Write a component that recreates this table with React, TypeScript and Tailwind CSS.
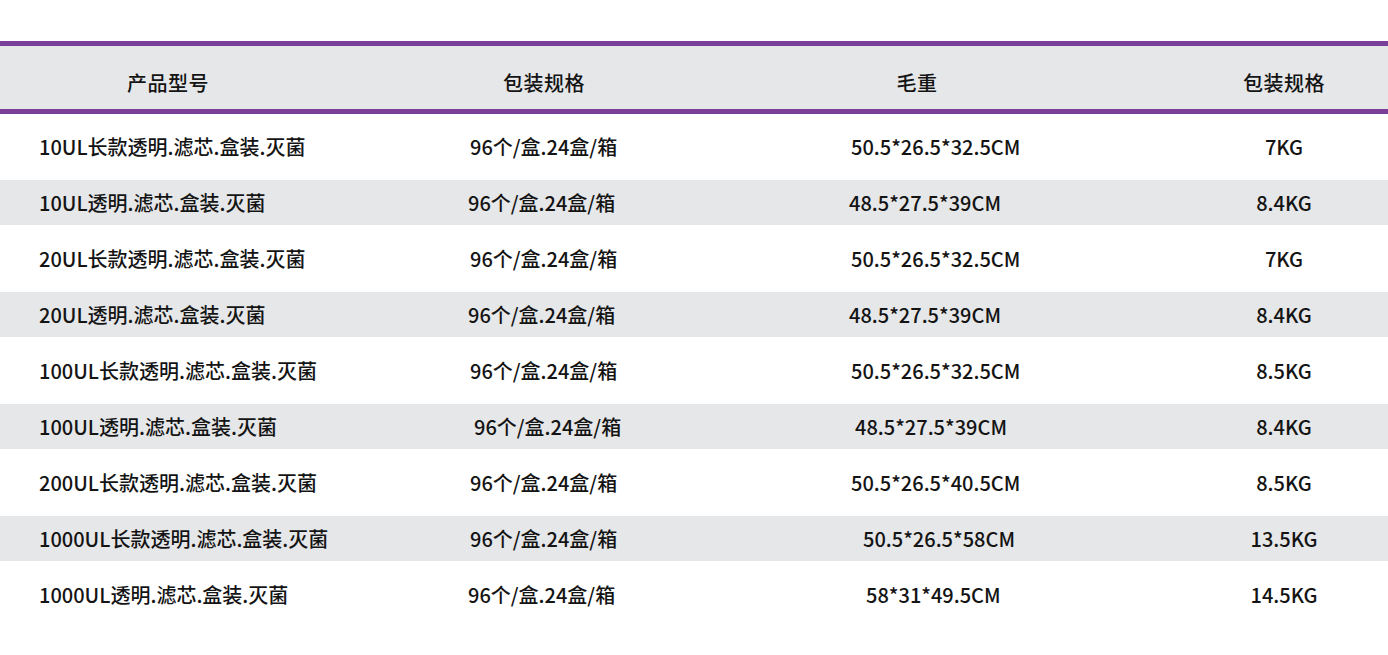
import React from "react";

type Row = {
  name: string;
  pack: string;
  packPad: string;
  size: string;
  sizePad: string;
  weight: string;
};

const rows: Row[] = [
  { name: "10UL长款透明.滤芯.盒装.灭菌", pack: "96个/盒.24盒/箱", packPad: "pl-[134px]", size: "50.5*26.5*32.5CM", sizePad: "pl-[99px]", weight: "7KG" },
  { name: "10UL透明.滤芯.盒装.灭菌", pack: "96个/盒.24盒/箱", packPad: "pl-[132px]", size: "48.5*27.5*39CM", sizePad: "pl-[97px]", weight: "8.4KG" },
  { name: "20UL长款透明.滤芯.盒装.灭菌", pack: "96个/盒.24盒/箱", packPad: "pl-[134px]", size: "50.5*26.5*32.5CM", sizePad: "pl-[99px]", weight: "7KG" },
  { name: "20UL透明.滤芯.盒装.灭菌", pack: "96个/盒.24盒/箱", packPad: "pl-[132px]", size: "48.5*27.5*39CM", sizePad: "pl-[97px]", weight: "8.4KG" },
  { name: "100UL长款透明.滤芯.盒装.灭菌", pack: "96个/盒.24盒/箱", packPad: "pl-[134px]", size: "50.5*26.5*32.5CM", sizePad: "pl-[99px]", weight: "8.5KG" },
  { name: "100UL透明.滤芯.盒装.灭菌", pack: "96个/盒.24盒/箱", packPad: "pl-[138px]", size: "48.5*27.5*39CM", sizePad: "pl-[103px]", weight: "8.4KG" },
  { name: "200UL长款透明.滤芯.盒装.灭菌", pack: "96个/盒.24盒/箱", packPad: "pl-[134px]", size: "50.5*26.5*40.5CM", sizePad: "pl-[99px]", weight: "8.5KG" },
  { name: "1000UL长款透明.滤芯.盒装.灭菌", pack: "96个/盒.24盒/箱", packPad: "pl-[134px]", size: "50.5*26.5*58CM", sizePad: "pl-[111px]", weight: "13.5KG" },
  { name: "1000UL透明.滤芯.盒装.灭菌", pack: "96个/盒.24盒/箱", packPad: "pl-[132px]", size: "58*31*49.5CM", sizePad: "pl-[114px]", weight: "14.5KG" },
];

const font = "font-['Noto_Sans_CJK_SC','Noto_Sans',sans-serif]";

export default function App() {
  return (
    <div className={`w-[1388px] h-[655px] bg-white ${font} text-[#141414] overflow-hidden`}>
      <div className="h-[41px]" />
      <div className="border-y-[5px] border-[#7a3f97] bg-[#e6e7e9] h-[73px] flex items-center pt-[11px] text-[20px] font-medium tracking-[0.5px]">
        <div className="w-[336px] text-center">产品型号</div>
        <div className="w-[416px] text-center">包装规格</div>
        <div className="w-[330px] text-center">毛重</div>
        <div className="w-[306px] pl-[98px] text-center">包装规格</div>
      </div>
      <div className="flex flex-col pt-[10px] gap-[11px] text-[20px] font-medium">
        {rows.map((r, i) => (
          <div
            key={i}
            className={`h-[45px] flex items-center ${i % 2 === 1 ? "bg-[#e6e7e9]" : "bg-white"}`}
          >
            <div className="w-[336px] pl-[39px] whitespace-nowrap">{r.name}</div>
            <div className={`w-[416px] whitespace-nowrap ${r.packPad}`}>{r.pack}</div>
            <div className={`w-[330px] whitespace-nowrap ${r.sizePad}`}>{r.size}</div>
            <div className="w-[306px] pl-[98px] text-center whitespace-nowrap">{r.weight}</div>
          </div>
        ))}
      </div>
    </div>
  );
}
